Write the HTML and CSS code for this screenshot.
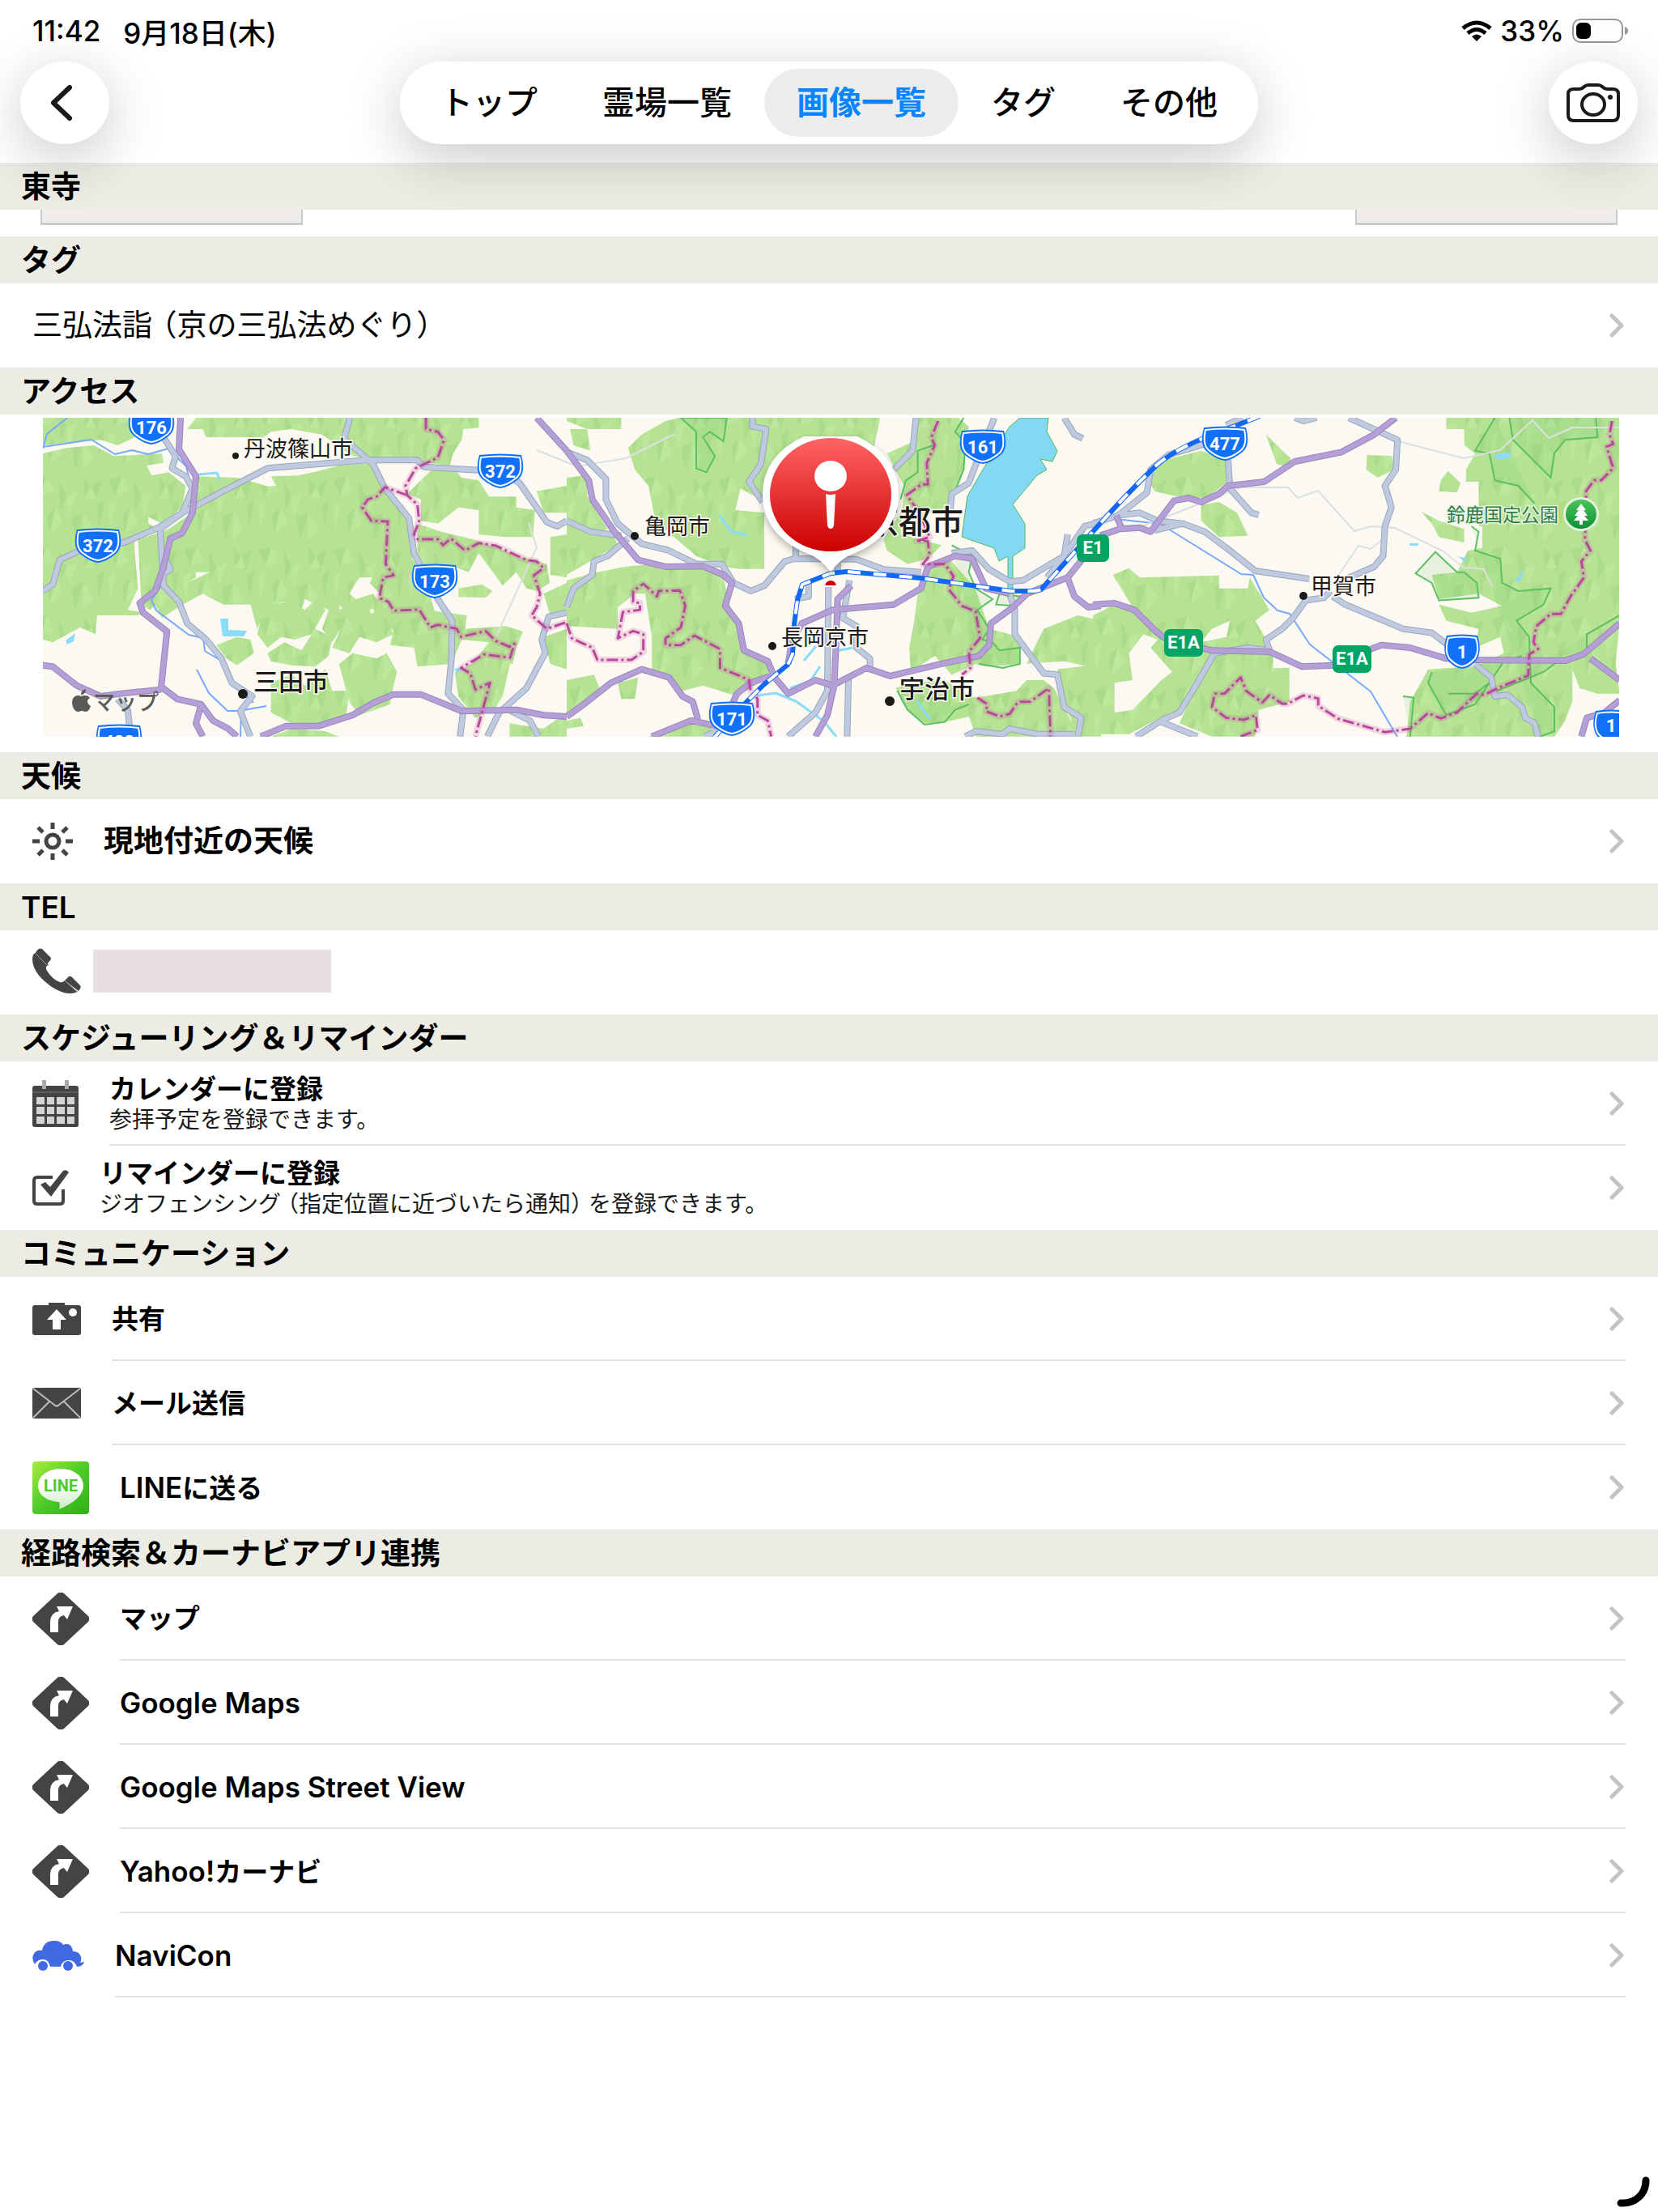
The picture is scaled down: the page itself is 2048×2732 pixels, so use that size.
FILE: index.html
```html
<!DOCTYPE html>
<html lang="ja">
<head>
<meta charset="utf-8">
<meta name="viewport" content="width=device-width, initial-scale=1">
<title>東寺</title>
<link rel="stylesheet" href="styles.css">
</head>
<body>
<svg class="sprite" aria-hidden="true">
  <symbol id="i-chevron" viewBox="0 0 18 30"><path d="M3 3 15 15 3 27" fill="none" stroke="#c4c4c6" stroke-width="5" stroke-linecap="round" stroke-linejoin="round"/></symbol>
  <symbol id="i-sign" viewBox="0 0 70 65">
    <path d="M31 1Q35-2 39 1L69 29Q72 32 69 36L39 64Q35 67 31 64L1 36Q-2 32 1 29Z" fill="#444"/>
    <path d="M22 49V36Q22 25 33 23L30 17H50L43 33 39 28Q32 29 32 36V49Z" fill="#fff"/>
  </symbol>
</svg>

<header class="top">
  <div class="status">
    <span>11:42</span><span>9月18日(木)</span>
    <span class="status-right">
      <svg width="38" height="26" viewBox="0 0 38 26" aria-label="Wi-Fi"><g fill="none" stroke="#000" stroke-width="5"><path d="M2 10Q19-4 36 10"/><path d="M8 16Q19 7 30 16"/></g><path d="M13 20Q19 15 25 20L19 26Z"/></svg>
      <span>33%</span>
      <svg class="battery" width="70" height="30" viewBox="0 0 70 30" aria-label="バッテリー"><rect x="1" y="1" width="61" height="28" rx="9" fill="none" stroke="#999" stroke-width="2"/><rect x="5" y="5" width="18" height="20" rx="6"/><path d="M65 10Q69 11 69 15T65 20Z" fill="#999"/></svg>
    </span>
  </div>
  <div class="bar">
    <button class="round" type="button" aria-label="戻る"><svg width="38" height="46" viewBox="0 0 38 46"><path d="M25 4 5 23 25 42" fill="none" stroke="#1a1a1a" stroke-width="6" stroke-linecap="round" stroke-linejoin="round"/></svg></button>
    <nav class="tabs">
      <a href="#top">トップ</a><a href="#places">霊場一覧</a><a class="active" href="#images" aria-current="page">画像一覧</a><a href="#tags">タグ</a><a href="#more">その他</a>
    </nav>
    <button class="round" type="button" aria-label="カメラ"><svg width="66" height="48" viewBox="0 0 66 48"><g fill="none" stroke="#1a1a1a" stroke-width="4"><path d="M2 13Q2 7 9 7H16Q19 7 22 4 24 2 27 2H39Q42 2 44 4 47 7 50 7H57Q64 7 64 13V39Q64 46 57 46H9Q2 46 2 39Z"/><ellipse cx="33" cy="26" rx="14" ry="13"/></g><circle cx="54" cy="17" r="3" fill="#1a1a1a"/></svg></button>
  </div>
</header>

<main>
  <h1 class="band">東寺</h1>
  <div class="thumbs"><span class="thumb"></span><span class="thumb"></span></div>

  <h2 class="band">タグ</h2>
  <ul class="list">
    <li><a class="row" href="#tag"><span class="body"><span class="label plain">三弘法詣<span class="open">（</span>京の三弘法めぐり<span class="close">）</span></span><svg class="chev"><use href="#i-chevron"/></svg></span></a></li>
  </ul>

  <h2 class="band">アクセス</h2>
  <div class="map-wrap">
  <svg class="map" viewBox="0 0 1947 394" preserveAspectRatio="xMidYMid slice" role="img" aria-label="地図">
    <defs>
      <pattern id="hills" width="220" height="260" patternUnits="userSpaceOnUse">
        <rect width="220" height="260" fill="#b6e393"/>
        <path d="M5 18 42 2 24 80ZM78 20 100 80 82 132ZM150 5 172 42 154 84ZM190 110 212 94 196 194ZM44 148 68 120 50 222ZM116 156 150 140 126 244ZM176 40 206 14 184 104Z" fill="#acdb8b"/>
        <path d="M42 2 64 58 24 80ZM100 80 132 64 106 158ZM68 120 90 176 50 222ZM172 42 188 86 154 84ZM2 118 24 100 10 206ZM150 140 178 194 148 248Z" fill="#bce89b"/>
      </pattern>
      <linearGradient id="pin" x2="0" y2="1"><stop offset="0" stop-color="#ff6464"/><stop offset="1" stop-color="#cc0000"/></linearGradient>
      <linearGradient id="tree" x2="0" y2="1"><stop offset="0" stop-color="#4cc35a"/><stop offset="1" stop-color="#0f9136"/></linearGradient>
      <filter id="shade" x="-20%" y="-20%" width="140%" height="150%"><feDropShadow dx="0" dy="4" stdDeviation="5" flood-opacity=".3"/></filter>
      <g id="shield"><path d="M-26-20Q0-23 26-20 32 2 22 10 10 20 0 21-10 20-22 10-32 2-26-20Z" fill="#1170f8"/><path d="M-24-17Q0-20 24-17 28 1 20 8 9 17 0 18-9 17-20 8-28 1-24-17Z" fill="none" stroke="#fff" stroke-width="2"/></g>
      <g id="shield-s"><path d="M-19-20Q0-23 19-20 25-2 18 10 10 20 0 21-10 20-18 10-25-2-19-20Z" fill="#1170f8"/><path d="M-17-17Q0-20 17-17 22-2 16 8 8 17 0 18-8 17-16 8-22-2-17-17Z" fill="none" stroke="#fff" stroke-width="2"/></g>

      <g id="grayroads">
        <g transform="translate(-13 -16) scale(.4209 .3333)">
          <path d="M932 48 915 125 1000 220 1035 310 1105 420 1120 550 1190 720 1232 800 1230 940 1220 1070 1265 1130 1255 1229"/>
          <path d="M30 690 60 665 80 575 130 545 270 510 370 455 440 400 560 320 690 235 980 205 1130 205 1150 230 1310 242 1380 250 1430 290 1510 435 1540 450 1568 430"/>
          <path d="M380 110 420 190 410 235 450 265 470 310 440 400 375 460 380 560 385 670 430 730 455 810 510 870 555 940 585 1030 645 1080 610 1135 640 1229"/>
          <path d="M250 1090 280 1130 285 1190M1568 770 1515 785 1495 870 1505 920 1450 1050 1370 1140 1335 1229M1390 1125 1460 1170 1485 1229M395 580 405 610 385 625"/>
        </g>
        <g transform="translate(647 -16) scale(.4209 .3333)">
          <path d="M0 175 60 205 115 275 115 350 150 440 220 515 300 540 380 590 455 590 490 660 540 690 580 670 640 580 670 570 850 572 930 610 1040 620"/>
          <path d="M0 430 70 470 160 485M180 495 120 560 80 580 75 630 20 680 0 750M545 48 545 80 585 90 570 220 535 285 575 360M672 520V570M1025 48 1015 170 960 240M1255 48 1210 190 1180 290 1130 330 1125 400M1130 550 1190 540 1240 610 1300 655 1340 650 1380 620 1460 560 1520 450 1568 435M1470 480 1460 560 1410 640M1460 48 1490 110 1515 125"/>
          <path d="M768 670 765 1060 730 1140 650 1229M795 570V630M830 650 810 790 850 820 850 900 890 940 890 975M827 1010 823 1229M710 650V710L670 720M1300 700 1315 760 1315 850 1350 910 1400 995 1440 1000 1460 1120 1510 1160 1500 1229M1170 1229 1200 1210 1280 1220 1300 1200 1380 1220 1490 1220M405 1229 450 1205"/>
        </g>
        <g transform="translate(1297 -16) scale(.4453 .3333)">
          <path d="M0 440 70 410 150 325 160 240 210 185 310 145M375 205 380 310 440 400 460 408M370 75 415 48M560 48 585 60 620 48M710 48 845 130 840 240 810 300 828 380 810 450 805 560 780 600 710 640M70 410 130 400 180 430 250 440 310 470 380 540 450 615 600 645M170 465 250 440M660 690 640 715 590 725 555 790 525 830 480 870 490 910M665 710 700 740 860 830 940 845 980 885M335 925 290 1030 240 1140 190 1170 120 1229M190 1175 290 1229M340 920 430 900 490 910M1060 960 1105 1010 1115 1080 1150 1075 1190 1120 1200 1160 1225 1180 1235 1229"/>
        </g>
      </g>
      <g id="purpleroads">
        <g transform="translate(-13 -16) scale(.4209 .3333)">
          <path d="M435 48 430 165 480 265 470 400 440 475 405 495 385 600 360 690 315 735 325 770 395 840 378 1045 425 1090 495 1110 530 1170 575 1200 600 1229M30 965 60 970 130 1040 200 1080 260 1070 378 1055M495 1110 480 1180 500 1229M670 1229 745 1190 840 1190 940 1150 1000 1105 1060 1073 1140 1073 1260 1135 1420 1130 1500 1150 1568 1155M1480 48 1568 170"/>
        </g>
        <g transform="translate(647 -16) scale(.4209 .3333)">
          <path d="M0 170 65 280 75 350 140 470 210 575 290 600 400 598 460 630 485 660 465 745 505 810 520 910 590 950 610 1010 650 1070 730 1020 780 1040 880 975 950 1005 1100 960 1210 930 1240 890 1245 810 1310 750 1350 700 1470 640 1515 570M1470 640 1490 710 1530 750 1568 745M0 1155 50 1110 130 1030 220 980 300 1010 340 1080 370 1100 385 1165M250 1229 365 1170 440 1190M485 1110 500 1070 540 1030 610 1000M650 960 660 880 690 810 780 760 960 740 1040 680 1060 600 1140 560 1190 570 1230 680 1300 700M835 670 795 720 790 900 785 1040 765 1150 730 1229"/>
        </g>
        <g transform="translate(1297 -16) scale(.4453 .3333)">
          <path d="M840 48 780 110 690 175 560 210 475 285 375 300 350 330 300 360 265 345 225 355 160 470 130 455 75 460 20 485M65 410 80 460M0 740 60 735 115 760 175 840 205 870 330 910 490 915 580 970 670 965M770 905 800 890 880 900 980 940 1060 945 1310 948 1360 925 1461 810M1380 940 1461 1020M1461 1095 1420 1140 1370 1160 1355 1229"/>
        </g>
      </g>
      <g id="borders">
        <g transform="translate(-13 -16) scale(.4209 .3333)">
          <path d="M1155 48V90L1190 100 1208 130 1190 195 1125 235 1095 300 1100 335 1130 370 1135 430 1120 480 1130 498 1190 498 1205 520 1228 495 1270 540 1310 512 1360 522 1450 575 1480 580 1500 605 1472 632 1490 700 1480 750 1465 780 1510 830 1568 805M1100 335 1035 305 1010 340 985 350 968 380 995 430 1043 432 1037 590 1060 632 1030 640 1018 715 1045 730 1060 763 1135 758 1168 825 1190 815 1245 830 1258 860 1330 838 1360 875 1400 897 1415 885 1402 937 1325 925 1258 975 1285 995 1300 1055 1343 1030 1300 1229"/>
        </g>
        <g transform="translate(647 -16) scale(.4209 .3333)">
          <path d="M0 810 15 865 75 900 90 945 190 945 225 915V850L195 838 150 865 165 768 215 760 215 735 195 730 195 690 225 663 265 710 270 690 332 688 348 745 335 825 290 865V890H335L375 855 450 905 450 975 500 1000 535 1020 540 1060 560 1090V1150L590 1170 600 1229M1090 60 1070 120 1080 150 1057 215 1060 295H1040L998 335 1035 400 1065 490 1025 505 1060 505 1065 560 1045 590 1110 590 1135 635 1122 685 1160 745 1200 765 1213 865 1180 915 1185 975 1160 1000M1205 1085 1235 1110 1230 1135 1270 1155 1300 1145 1325 1100H1360L1415 1050 1420 1229"/>
        </g>
        <g transform="translate(1297 -16) scale(.4453 .3333)">
          <path d="M1440 60 1433 110 1443 145 1425 155 1443 235 1410 280 1390 280 1368 320 1365 500 1380 540 1355 580 1362 640 1325 710 1298 775H1270L1230 820 1222 880 1235 905 1210 925 1207 1003 1130 1045 1085 1075 1065 1070 1010 1140 965 1162 930 1142 880 1200 810 1213 680 1163 625 1115V1088L583 1077 540 1108 525 1108 490 1075 470 1103 425 1060 410 1010 365 1070H338L330 1120 370 1160 420 1167 452 1150 457 1205 410 1229"/>
        </g>
      </g>
      <g id="rail">
        <path d="M1503-2C1455 18 1410 30 1376 58 1345 88 1315 120 1293 145L1233 212Q1228 214 1220 214H1195L1085 198 993 190 973 192 938 206 932 225 928 255 926 292 920 305 890 330 868 352 850 372 830 394"/>
      </g>
    </defs>

    <rect width="1947" height="394" fill="#fbf9f1"/>
    <g fill="url(#hills)">
      <g transform="translate(-13 -16) scale(.4209 .3333)">
        <path d="M30 48H285L300 120 250 150 200 130 30 150ZM30 180 100 160 180 150 240 190 380 180 385 215 335 225 350 262 400 250 450 300 440 380 380 440 340 415 340 440 370 460 300 490 300 545 310 680 280 760 330 770 310 780 190 780 185 850 140 825 60 880 30 870Z"/>
        <path d="M480 265 600 270 660 290 690 302 715 300 700 265 780 262 840 245 900 225 1000 215 1040 300 1110 420 1115 560 1110 620 1050 640 960 640 930 700 950 720 1000 700 1020 740 990 760 1000 800 960 860 940 800 900 740 910 820 880 880 850 830 870 760 800 720 790 760 740 730 690 740 660 830 640 740 560 740 500 700 440 740 380 790 360 740 390 690 470 650 520 620 440 620 400 600 410 500 470 420Z"/>
        <path d="M310 500 400 460 470 400 480 640 400 700 345 760 320 740ZM1030 560 1110 560 1150 640 1180 760 1150 830 1000 760 1020 700 990 660Z"/>
        <path d="M480 48H1310V85L1265 90 1260 130 1235 180 1225 225 1160 215 1100 200 1000 200 940 190 850 110 760 90 700 100 680 120 510 120 500 90 455 90Z"/>
        <path d="M540 890 600 860 640 870 650 920 600 965 570 940ZM690 920 740 880 790 910 830 830 880 860 870 930 830 970 760 965 700 950ZM700 1030 760 1000 800 1040 860 980 880 1060 930 1060 920 1160 860 1180 760 1180 700 1140ZM900 960 940 920 1010 940 1040 920 1070 990 1060 1040 1050 1110 960 1150 930 1100Z"/>
        <path d="M680 740 760 730 800 760 830 720 860 760 820 850 770 870 730 860 690 900 660 850ZM880 900 905 830 900 760 940 740 965 790 1020 760 1060 850 1010 880 960 860 930 920ZM1500 700 1568 660V770L1520 780Z"/>
        <path d="M1130 440 1200 470 1300 500 1450 570 1510 590 1518 660 1480 690 1450 680 1420 620 1380 670 1340 600 1310 550 1280 620 1240 600 1140 590 1130 540ZM1000 750 1160 760 1275 780 1270 830 1390 820 1440 840 1420 900 1410 960 1370 960 1340 880 1260 870 1230 960 1130 970 1120 900 1050 890 1060 830 1020 870Z"/>
        <path d="M1260 270 1310 280 1340 340 1420 340V380L1475 390 1470 490H1390L1310 480V390L1250 380 1190 440 1140 430V350L1100 330 1180 230 1240 240ZM1480 320 1568 300V400L1500 400ZM1520 490 1568 480V640L1520 630ZM1240 990 1290 960 1340 880 1420 900 1400 970 1380 1080 1360 1120 1300 1160 1250 1080ZM1500 860 1568 830V980L1520 960ZM1400 1229V1180L1500 1200 1568 1140V1229ZM700 1229 760 1200 860 1210 900 1229ZM1250 680 1320 665 1350 690 1330 715 1250 712Z"/>
      </g>
      <g transform="translate(647 -16) scale(.4209 .3333)">
        <path d="M0 270 60 260V340L120 460 70 480 140 490 150 520 0 630ZM0 48H160V90H60L0 60ZM10 90 60 90 70 170 20 150Z"/>
        <path d="M180 160 220 110 290 60 330 48H920L900 170 700 300 580 360 510 310 495 390 580 400V608H510L460 600 380 560 260 430 240 300 200 240Z"/>
        <path d="M940 180 1010 140 1030 48H1150L1180 80 1165 240 1130 340 1100 400 980 400 930 500 940 540 1000 590 1060 570 1100 520 1040 500 980 480 990 300Z"/>
        <path d="M0 650 90 620 170 600 250 590 400 610 460 640 480 750 520 900 580 940 600 1000 540 1050 500 1080 450 1060 400 1040 340 1060 250 980 250 860 230 700 200 700 150 750 150 830 0 820ZM230 700 340 690 400 850 300 900ZM0 1020 80 1000 100 1060 0 1150ZM150 1030 210 1010 200 1090 160 1090ZM240 1229 360 1160 430 1200 400 1229ZM0 1170 40 1160 50 1190 0 1200Z"/>
        <path d="M1030 700 1060 600 1130 580 1200 680 1210 720 1240 830 1300 850 1335 870 1330 960 1230 970 1200 960 1130 1000 1080 930 1010 990 1005 900 1020 800ZM965 1050 1010 1030 1110 1020 1180 1080 1240 1090 1200 1150 1110 1175 1050 1180 1000 1130ZM1180 1090 1320 1060 1350 1020H1400L1430 1050 1480 1170 1568 1200V1229H1200L1180 1150ZM1400 830 1500 780 1568 800V980L1460 950 1350 960 1380 880ZM1440 980 1568 960V1229H1500L1460 1100Z"/>
      </g>
      <g transform="translate(1297 -16) scale(.4453 .3333)">
        <path fill-rule="evenodd" d="M55 630 100 605 130 640 350 632V680H430L435 640 490 760 450 800 500 910V975H545V1100L460 1130 450 1229H330L240 1180 260 1120 200 1150 100 1220H0V780L60 740 110 750ZM60 1030 110 1020 100 920 140 850 180 870 160 900 220 990 190 1020 110 1130 60 1140ZM330 830 380 800 370 860 300 880Z"/>
        <path d="M150 260 210 200 300 170 370 200V290L320 340 270 350 170 320ZM300 370 350 360 400 400 430 485 350 490 300 430ZM480 110 550 200 540 230 510 220ZM760 185 830 190 835 240 790 270 758 240ZM985 245 1020 290 1010 325 960 320 965 280ZM910 395 960 430 1030 460V510L960 490 940 440Z"/>
        <path d="M980 48H1461V800L1450 960 1461 1070 1400 1070 1350 1050 1330 980V1100L1310 1170 1280 1229H870L880 1100 930 980 1060 970 1140 920 1130 860 1060 900 1070 830 980 800 960 740 1050 770 1135 745 1070 700 960 720 940 630 1010 620 1040 540 1080 530V450H1070V285H1035V240L1060 180 1030 150V90H980Z"/>
      </g>
    </g>
    <g class="park">
      <g transform="translate(647 -16) scale(.4209 .3333)"><path d="M335 48 380 100 380 235 410 250 435 190 400 120 420 100 460 135 470 48ZM1165 48 1140 100 1170 140 1165 240 1130 350M1075 150 1030 170 1030 250 995 280 980 350M1130 520 1190 560 1180 620 1200 680 1250 720 1205 760 1240 830 1220 870 1250 880 1270 910 1330 900 1330 960 1280 975 1210 960M1270 700 1330 710 1310 745 1260 740ZM970 1060 1000 1130 1050 1185 1110 1175 1140 1130 1180 1110"/></g>
      <g transform="translate(1297 -16) scale(.4453 .3333)"><path d="M1115 48 1060 170 1100 180 1115 280 1180 300 1225 365M1155 48 1165 130 1210 190 1270 270 1280 180 1310 130 1400 120 1395 48M1050 450 1070 470 1060 540 1130 570 1135 660 1180 690 1270 680 1250 740 1175 800 1210 860 1215 1030 1280 1120V1210L1240 1229M950 545 895 625 940 660 960 725 1070 715 1065 660 1030 620 1010 620ZM860 1080 890 1085 880 1229M940 990 930 1030 980 1150 1060 1110 1140 950 1190 930M985 1070 1060 1070 1110 1020M1461 780 1370 850 1370 920 1290 950 1250 990 1120 1060"/></g>
    </g>
    <path d="M1207 0H1242L1240 17 1253 41 1247 54 1232 51 1240 64 1228 71 1198 107 1213 131V161L1198 171V218H1192V171L1181 177 1175 161 1135 147 1142 97 1161 64 1194 11Z" fill="#85d8f3" stroke="#4fb95a" stroke-width="1"/>
    <g fill="#8bdcfa"><path d="M219 248H229V262L252 263 248 270 222 270ZM28 275 40 266 38 276 30 280ZM508 310 520 308 512 316ZM1793 46 1815 42 1810 50 1797 52ZM1817 203 1829 188 1826 201ZM1748 171 1760 174 1756 178ZM1688 155H1699V158H1688Z"/></g>
    <g class="river"><path d="M0 36 60 27 89 45 110 40 130 45 155 38M0 38 5 20 30 0M155 38 177 60 184 90 176 112 142 138 148 205 134 225 140 238 180 268 198 272 200 288 220 300 232 326 260 352M190 311 205 340 228 362 242 362 276 356M245 362 244 394M1325 125 1380 131 1480 193 1495 194 1508 222 1525 238 1540 242 1565 280 1640 338 1673 394"/></g>
    <g class="stream"><path d="M192 70 215 68 219 78M882 343 905 340 930 350 965 375 980 394M923 334 948 325 960 307M940 300 955 282M980 288 1000 284M1080 350 1095 372M835 120 850 140 870 145"/></g>
    <g class="trail"><path d="M1355 135 1480 86 1538 86 1550 99 1575 90 1620 140 1640 134 1670 136 1730 165 1755 185 1780 187 1790 208M1600 195 1625 158 1640 162 1655 150M1670 28 1755 50 1800 40 1840 3 1860 25 1890 12 1947 12M610 40 660 60 720 50 780 20M600 130 610 160 560 270"/></g>

    <use href="#grayroads" class="road gray-case"/><use href="#grayroads" class="road gray-fill"/>
    <use href="#purpleroads" class="road purple-case"/><use href="#purpleroads" class="road purple-fill"/>
    <use href="#borders" class="border-glow"/><use href="#borders" class="border-line"/>
    <use href="#rail" class="rail-blue"/><use href="#rail" class="rail-white"/>

    <g class="shield-text">
      <use href="#shield" x="134" y="12"/><text x="134" y="20">176</text>
      <use href="#shield" x="68" y="158"/><text x="68" y="166">372</text>
      <use href="#shield" x="565" y="66"/><text x="565" y="74">372</text>
      <use href="#shield" x="484" y="202"/><text x="484" y="210">173</text>
      <use href="#shield" x="94" y="400"/><text x="94" y="408">428</text>
      <use href="#shield" x="1161" y="36"/><text x="1161" y="44">161</text>
      <use href="#shield" x="851" y="372"/><text x="851" y="380">171</text>
      <use href="#shield" x="1460" y="32"/><text x="1460" y="40">477</text>
      <use href="#shield-s" x="1753" y="289"/><text x="1753" y="297">1</text>
      <use href="#shield-s" x="1937" y="382"/><text x="1937" y="388">1</text>
      <rect x="1277" y="144" width="40" height="34" rx="7" fill="#00a566"/><text x="1297" y="168">E1</text>
      <rect x="1385" y="261" width="48" height="34" rx="7" fill="#00a566"/><text x="1409" y="285">E1A</text>
      <rect x="1593" y="281" width="48" height="34" rx="7" fill="#00a566"/><text x="1617" y="305">E1A</text>
    </g>
    <g fill="#1a1a1a"><circle cx="238" cy="47" r="4"/><circle cx="247" cy="341" r="6"/><circle cx="731" cy="146" r="5"/><circle cx="901" cy="282" r="5"/><circle cx="1046" cy="350" r="6"/><circle cx="1557" cy="220" r="5"/></g>
    <g class="city">
      <text x="248" y="48">丹波篠山市</text><text x="743" y="144">亀岡市</text><text x="912" y="281">長岡京市</text><text x="1566" y="218">甲賀市</text>
      <g class="mid"><text x="260" y="337">三田市</text><text x="1058" y="346">宇治市</text></g>
      <text class="big" x="1017" y="143">京都市</text>
      <text class="parkname" x="1734" y="128">鈴鹿国定公園</text>
    </g>
    <ellipse cx="1900" cy="119" rx="22" ry="21" fill="#e4f3dc"/><ellipse cx="1900" cy="119" rx="19" ry="18" fill="url(#tree)"/>
    <path d="M1900 106 1906 114H1903L1908 121H1904L1909 127H1902V132H1898V127H1891L1896 121H1892L1897 114H1894Z" fill="#fff"/>

    <g class="maker"><path d="M47 344C43 342 37 343 36 351 36 358 40 363 43 363 46 363 46 362 48 362S51 363 53 363C56 363 58 359 59 356 54 353 54 348 58 346 55 342 50 343 47 344ZM47 342C47 338 50 336 53 335 53 339 51 342 47 342Z"/><text x="62" y="361">マップ</text></g>

    <g filter="url(#shade)"><path d="M940 23H1006Q1057 47 1057 95C1057 138 1022 160 1000 168Q986 173 973 190 960 173 946 168C924 160 889 138 889 95Q889 47 940 23Z" fill="#fff"/></g>
    <ellipse cx="973" cy="95" rx="75" ry="70" fill="url(#pin)"/>
    <ellipse cx="973" cy="72" rx="20" ry="19" fill="#fff"/><path d="M967 94Q973 96 979 94L977 133Q976 137 973 137T969 133Z" fill="#fff"/>
    <path d="M965 208A8 8 0 0 1 981 208Z" fill="#cc0000" stroke="#fff" stroke-width="2"/>
  </svg>
  </div>

  <h2 class="band">天候</h2>
  <ul class="list">
    <li><a class="row" href="#weather"><svg width="50" height="48" viewBox="0 0 50 48"><g fill="none" stroke="#444" stroke-width="5"><circle cx="25" cy="24" r="8"/><path d="M25 1V9M25 39V47M0 24H9M41 24H50M7 7 13 13M37 35 43 41M7 41 13 35M37 13 43 7"/></g></svg><span class="body"><span class="label large">現地付近の天候</span><svg class="chev"><use href="#i-chevron"/></svg></span></a></li>
  </ul>

  <h2 class="band">TEL</h2>
  <ul class="list">
    <li><a class="row tel" href="#tel" aria-label="電話"><svg width="60" height="56" viewBox="0 0 60 56"><path d="M1 8 5 5 20 21Q15 22 18 28 25 39 34 42 37 43 40 40L56 54Q46 58 36 54 22 49 9 35-3 20 1 8Z" fill="#444"/><path d="M5 4Q8-1 12 1L22 11Q24 13 22 15L18 20 4 5ZM40 40 45 35Q47 34 49 36L59 46Q61 49 57 53Z" fill="#444"/><path d="M4 7 18 21M40 40 55 54" stroke="#999" stroke-width="1"/></svg><span class="masked"></span></a></li>
  </ul>

  <h2 class="band">スケジューリング＆リマインダー</h2>
  <ul class="list">
    <li><a class="row" href="#calendar"><svg width="57" height="58" viewBox="0 0 57 58"><path d="M0 10Q0 7 3 7H54Q57 7 57 10V55Q57 58 54 58H3Q0 58 0 55Z" fill="#444"/><path d="M0 15H57" stroke="#777"/><path d="M12 0H17V11H12ZM40 0H45V11H40Z" fill="#aaa"/><path d="M5 21H15V30H5ZM18 21H27V30H18ZM30 21H40V30H30ZM43 21H52V30H43ZM5 33H15V42H5ZM18 33H27V42H18ZM30 33H40V42H30ZM43 33H52V42H43ZM5 45H15V54H5ZM18 45H27V54H18ZM30 45H40V54H30ZM43 45H52V54H43Z" fill="#d4d4d4"/></svg><span class="body"><span class="label">カレンダーに登録<small>参拝予定を登録できます。</small></span><svg class="chev"><use href="#i-chevron"/></svg></span></a></li>
    <li><a class="row" href="#reminder"><svg width="45" height="44" viewBox="0 0 45 44"><path d="M25 9H6Q2 9 2 13V38Q2 42 6 42H34Q38 42 38 38V24" fill="none" stroke="#444" stroke-width="4"/><path d="M10 18 16 15 22 21 38 1Q42-1 45 3L23 33Z" fill="#444"/></svg><span class="body"><span class="label">リマインダーに登録<small>ジオフェンシング<span class="open">（</span>指定位置に近づいたら通知<span class="close">）</span>を登録できます。</small></span><svg class="chev"><use href="#i-chevron"/></svg></span></a></li>
  </ul>

  <h2 class="band">コミュニケーション</h2>
  <ul class="list">
    <li><a class="row" href="#share"><svg width="60" height="40" viewBox="0 0 60 40"><path d="M3 3H20V0H40V3H57Q60 3 60 6V37Q60 40 57 40H3Q0 40 0 37V6Q0 3 3 3Z" fill="#444"/><path d="M30 8 42 21H35V33H25V21H18Z" fill="#fff"/><circle cx="50" cy="12" r="5" fill="#fff"/></svg><span class="body"><span class="label">共有</span><svg class="chev"><use href="#i-chevron"/></svg></span></a></li>
    <li><a class="row" href="#mail"><svg width="60" height="38" viewBox="0 0 60 38"><rect width="60" height="38" rx="2" fill="#444"/><path d="M1 1 27 21Q30 24 33 21L59 1M1 37 21 17M59 37 39 17" fill="none" stroke="#bbb" stroke-width="2"/></svg><span class="body"><span class="label">メール送信</span><svg class="chev"><use href="#i-chevron"/></svg></span></a></li>
    <li><a class="row" href="#line"><svg width="70" height="65" viewBox="0 0 70 65"><defs><linearGradient id="lg" x2="1" y2="1"><stop offset="0" stop-color="#a8ec3c"/><stop offset=".5" stop-color="#4ccb2a"/><stop offset="1" stop-color="#2fb014"/></linearGradient><linearGradient id="lb" x2="0" y2="1"><stop offset=".4" stop-color="#fff"/><stop offset="1" stop-color="#c9eabf"/></linearGradient></defs><rect width="70" height="65" rx="4" fill="url(#lg)"/><path d="M35 9C51 9 63 18 63 30 63 41 52 51 33 59 34 56 34 53 33 50 17 49 7 41 7 30 7 18 19 9 35 9Z" fill="url(#lb)"/><text class="line-word" x="35" y="37">LINE</text></svg><span class="body"><span class="label"><span class="latin">LINE</span>に送る</span><svg class="chev"><use href="#i-chevron"/></svg></span></a></li>
  </ul>

  <h2 class="band">経路検索＆カーナビアプリ連携</h2>
  <ul class="list closed">
    <li><a class="row" href="#map"><svg width="70" height="65"><use href="#i-sign"/></svg><span class="body"><span class="label">マップ</span><svg class="chev"><use href="#i-chevron"/></svg></span></a></li>
    <li><a class="row" href="#gmaps"><svg width="70" height="65"><use href="#i-sign"/></svg><span class="body"><span class="label latin">Google Maps</span><svg class="chev"><use href="#i-chevron"/></svg></span></a></li>
    <li><a class="row" href="#street"><svg width="70" height="65"><use href="#i-sign"/></svg><span class="body"><span class="label latin">Google Maps Street View</span><svg class="chev"><use href="#i-chevron"/></svg></span></a></li>
    <li><a class="row" href="#yahoo"><svg width="70" height="65"><use href="#i-sign"/></svg><span class="body"><span class="label"><span class="latin">Yahoo!</span>カーナビ</span><svg class="chev"><use href="#i-chevron"/></svg></span></a></li>
    <li><a class="row" href="#navicon"><svg width="64" height="37" viewBox="0 0 64 37"><g fill="#4169e1"><path d="M3 29Q-2 21 2 16 5 11 12 12 14 0 27 0 35 0 38 5 46 2 49 9 50 12 50 13 58 13 60 20 61 24 59 27L64 26Q62 32 55 32 52 24 45 24 37 24 35 32H22Q20 23 13 23 6 23 3 29Z"/><circle cx="13" cy="31" r="6"/><circle cx="44" cy="31" r="6"/></g></svg><span class="body"><span class="label latin">NaviCon</span><svg class="chev"><use href="#i-chevron"/></svg></span></a></li>
  </ul>
</main>

<svg class="corner" width="42" height="38" viewBox="0 0 42 38" aria-hidden="true"><path d="M37 5C37 22 24 34 6 33" fill="none" stroke="#000" stroke-width="9" stroke-linecap="round"/></svg>
</body>
</html>
```

FILE: styles.css
```css
* { box-sizing: border-box; }

body {
  margin: 0;
  min-height: 100vh;
  position: relative;
  background: #fff;
  color: #000;
  font-family: Inter, "Noto Sans CJK JP", sans-serif;
  font-size: 33px;
}

a { color: inherit; text-decoration: none; }
.sprite { position: absolute; width: 0; height: 0; }

/* Status bar and floating navigation */
.top { position: relative; z-index: 1; height: 201px; }

.status {
  display: flex;
  align-items: center;
  gap: 28px;
  height: 76px;
  padding: 0 36px 0 40px;
  font-size: 35px;
  font-weight: 500;
}
.status-right { display: flex; align-items: center; gap: 10px; margin-left: auto; }

.bar {
  display: flex;
  align-items: center;
  justify-content: space-between;
  padding: 0 25px;
}

.round, .tabs {
  background: #fff;
  box-shadow: 0 16px 70px rgba(0, 0, 0, .22);
}

.round {
  display: flex;
  align-items: center;
  justify-content: center;
  width: 110px;
  height: 102px;
  padding: 0;
  border: 0;
  border-radius: 50%;
}

.tabs { display: flex; padding: 9px 10px; border-radius: 51px; }
.tabs a {
  padding: 0 40px;
  border-radius: 42px;
  font-size: 40px;
  font-weight: 500;
  line-height: 84px;
}
.tabs .active { background: #ebeded; color: #0a84ff; font-weight: 700; }

/* Section headings */
.band {
  margin: 0;
  padding: 2px 26px 0;
  background: #ecece4;
  font-size: 37px;
  font-weight: 600;
  line-height: 56px;
}

.thumbs { display: flex; justify-content: space-between; height: 33px; padding: 0 50px; }
.thumb {
  width: 324px;
  height: 19px;
  border: solid #cbcaca;
  border-width: 0 2px 3px;
  background: #f0ecea;
}

/* Rows */
.list { margin: 0; padding: 0; list-style: none; }
.row { display: flex; align-items: center; gap: 38px; height: 104px; padding: 0 40px; }
.row > svg { flex: none; }

.body {
  display: flex;
  flex: 1;
  align-items: center;
  justify-content: space-between;
  align-self: stretch;
  padding-top: 2px;
  border-bottom: 2px solid #e3e3e4;
}
.list:not(.closed) li:last-child .body { border-bottom-color: transparent; }

.label { font-weight: 600; line-height: 40px; }
.label.large { font-size: 37px; }
.label.plain { font-size: 37px; font-weight: 400; }
.label small { display: block; font-size: 28px; font-weight: 400; line-height: 36px; color: #1a1a1a; }
.latin { font-size: 35px; }
.open, .close { font-feature-settings: "halt"; }
.open { margin-left: 8px; }
.close { margin-right: 8px; }
.plain .open { margin-left: 12px; }
.chev { flex: none; width: 18px; height: 30px; margin-right: 2px; }

.row.tel { gap: 15px; padding-bottom: 4px; }
.masked { width: 294px; height: 53px; background: #e8dfe0; }

/* Map */
.map-wrap { padding: 4px 48px 19px 53px; }
.map { display: block; width: 100%; height: 394px; }
.map path { vector-effect: non-scaling-stroke; }
.park { fill: rgba(90, 190, 90, .12); stroke: #5cc063; stroke-width: 2; }
.river, .stream, .trail, .road, .border-glow, .border-line, .rail-blue, .rail-white { fill: none; stroke-linejoin: round; }
.river { stroke: #78a8ff; stroke-width: 2; }
.stream { stroke: #8bdcfa; stroke-width: 3; }
.trail { stroke: #dce0e0; stroke-width: 2; }
.gray-case { stroke: #97a5c0; stroke-width: 8; }
.gray-fill { stroke: #c0cade; stroke-width: 6; }
.purple-case { stroke: #9985bd; stroke-width: 8; }
.purple-fill { stroke: #b4a0d6; stroke-width: 6; }
.border-glow { stroke: rgba(200, 80, 160, .22); stroke-width: 8; }
.border-line { stroke: #b8489c; stroke-width: 3; stroke-dasharray: 14 4 3 4; }
.rail-blue { stroke: #1268f5; stroke-width: 6; }
.rail-white { stroke: #fff; stroke-width: 4; stroke-dasharray: 16 16; }
.shield-text { fill: #fff; font: 700 22px Roboto, sans-serif; text-anchor: middle; }
.city { fill: #1a1a1a; font-size: 27px; stroke: #faf8f0; stroke-width: 3; paint-order: stroke; }
.city .mid { font-size: 31px; font-weight: 500; }
.city .big { font-size: 40px; font-weight: 500; }
.city .parkname { font-size: 23px; fill: #2c7a4b; stroke: #e6f5dc; }
.maker { fill: #5a5a58; font-size: 27px; font-weight: 500; }
.line-word { fill: #4ccb2a; font: 700 20px Roboto, sans-serif; text-anchor: middle; }

.corner { position: absolute; right: 10px; bottom: 6px; }
```
